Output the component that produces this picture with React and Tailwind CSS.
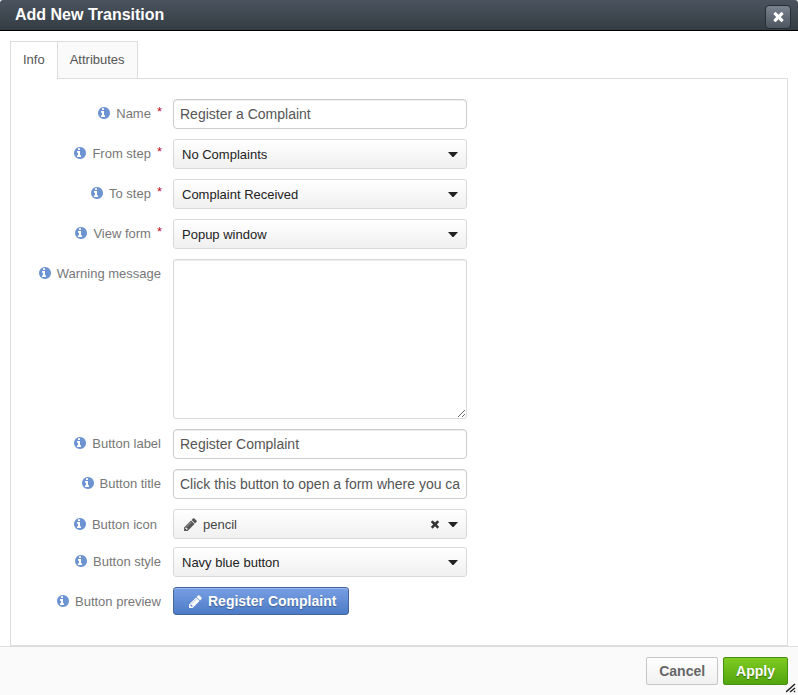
import React from 'react';

const PATHS = {
  info: 'M1024 1376v-160q0-14-9-23t-23-9h-96v-512q0-14-9-23t-23-9h-320q-14 0-23 9t-9 23v160q0 14 9 23t23 9h96v320h-96q-14 0-23 9t-9 23v160q0 14 9 23t23 9h448q14 0 23-9t9-23zM896 480v-160q0-14-9-23t-23-9h-192q-14 0-23 9t-9 23v160q0 14 9 23t23 9h192q14 0 23-9t9-23zM1664 896q0 209-103 385.500t-279.500 279.500-385.500 103-385.500-103-279.500-279.500-103-385.500 103-385.500 279.500-279.500 385.500-103 385.500 103 279.500 279.500 103 385.500z',
  pencil: 'M491 1536l91-91-235-235-91 91v107h128v128h107zM1014 608q0-22-22-22-10 0-17 7l-542 542q-7 7-7 17 0 22 22 22 10 0 17-7l542-542q7-7 7-17zM960 416l416 416-832 832h-416v-416zM1643 512q0 53-37 90l-166 166-416-416 166-165q36-38 90-38 53 0 91 38l235 234q37 39 37 91z',
  times: 'M1490 1322q0 40-28 68l-136 136q-28 28-68 28t-68-28l-294-294-294 294q-28 28-68 28t-68-28l-136-136q-28-28-28-68t28-68l294-294-294-294q-28-28-28-68t28-68l136-136q28-28 68-28t68 28l294 294 294-294q28-28 68-28t68 28l136 136q28 28 28 68t-28 68l-294 294 294 294q28 28 28 68z',
};

function Icon({ name, className }) {
  return (
    <svg viewBox="0 0 1792 1792" className={className} fill="currentColor" aria-hidden="true">
      <path d={PATHS[name]} />
    </svg>
  );
}

function Row({ id, label, required, centered, children }) {
  return (
    <div className={centered ? 'flex items-center gap-3' : 'flex items-start gap-3'}>
      <label
        htmlFor={id}
        className={
          'flex h-7 shrink-0 items-center justify-end whitespace-nowrap text-[13px] text-[#777] ' +
          (centered ? 'w-[150px] pr-1' : 'w-[150px]')
        }
      >
        <Icon name="info" className="mr-[5px] size-[14px] text-[#6d93d3]" />
        <span className="pt-0.5">{label}</span>
        {required && <span className="-mr-px ml-1.5 h-5 text-[13px] leading-[18px] text-[#c4122f]">*</span>}
      </label>
      <div className="w-[294px]">{children}</div>
    </div>
  );
}

function TextField({ id, value }) {
  return (
    <input
      id={id}
      type="text"
      defaultValue={value}
      className="block h-[30px] w-full rounded-[4px] border border-[#ccc] bg-white px-1.5 text-sm text-[#555] shadow-[inset_0_1px_1px_rgba(0,0,0,0.075)]"
    />
  );
}

function SelectField({ id, value, icon }) {
  return (
    <div className="relative">
      <select
        id={id}
        className={
          'block h-[30px] w-full appearance-none rounded-[3px] border border-[#d9d9d9] bg-linear-to-b from-white to-[#f0f0f0] pr-10 pt-0.5 text-[13px] ' +
          (icon ? 'pl-[29px] text-[#444]' : 'pl-2 text-[#222]')
        }
      >
        <option>{value}</option>
      </select>
      {icon && <Icon name={icon} className="pointer-events-none absolute left-2.5 top-2 size-[15px] text-[#555]" />}
      {icon && (
        <button type="button" aria-label="Clear" className="absolute right-[26px] top-[9px] text-[#333]">
          <Icon name="times" className="size-3" />
        </button>
      )}
      <svg viewBox="0 0 10 5" className="pointer-events-none absolute right-[9px] top-[13px] h-[5px] w-[10px] text-[#222]" fill="currentColor" aria-hidden="true">
        <path d="M0 0h10L5.500 5h-1z" />
      </svg>
    </div>
  );
}

export default function App() {
  return (
    <div className="relative flex min-h-screen flex-col bg-white font-['Liberation_Sans',Arial,sans-serif]">
      <header className="flex h-[31px] items-center justify-between rounded-t-[3px] border-b border-black bg-linear-to-b from-[#4b535f] to-[#343c43] pl-[15px] pr-[7px]">
        <h1 className="pb-px text-base font-bold leading-5 text-white">Add New Transition</h1>
        <button
          type="button"
          aria-label="Close"
          className="mt-[3px] flex h-6 w-[26px] items-center justify-center rounded-[4px] border border-[#272d34] bg-linear-to-b from-[#7b8390] to-[#4d5560] text-white"
        >
          <Icon name="times" className="size-[15px]" />
        </button>
      </header>

      <main className="flex grow flex-col px-2.5 pt-2.5">
        <div role="tablist" className="z-10 -mb-px flex text-[13px] text-[#555]">
          <button type="button" role="tab" aria-selected="true" className="h-[38px] border border-b-0 border-[#ddd] bg-white px-3 pb-0.5">
            Info
          </button>
          <button type="button" role="tab" aria-selected="false" className="h-[38px] border border-l-0 border-[#ddd] bg-[#fafafa] px-3 pb-px">
            Attributes
          </button>
        </div>
        <form className="flex grow flex-col gap-2.5 border border-[#ddd] pb-[30px] pt-5">
          <Row id="name" label="Name" required>
            <TextField id="name" value="Register a Complaint" />
          </Row>
          <Row id="from" label="From step" required>
            <SelectField id="from" value="No Complaints" />
          </Row>
          <Row id="to" label="To step" required>
            <SelectField id="to" value="Complaint Received" />
          </Row>
          <Row id="view" label="View form" required>
            <SelectField id="view" value="Popup window" />
          </Row>
          <Row id="warning" label="Warning message">
            <textarea id="warning" className="block h-40 w-full rounded-[3px] border border-[#d9d9d9] p-1.5 text-sm text-[#555] shadow-[inset_0_1px_1px_rgba(0,0,0,0.075)]" />
          </Row>
          <Row id="label" label="Button label">
            <TextField id="label" value="Register Complaint" />
          </Row>
          <Row id="title" label="Button title">
            <TextField id="title" value="Click this button to open a form where you can" />
          </Row>
          <div className="flex flex-col gap-2">
            <Row id="icon" label="Button icon" centered>
              <SelectField id="icon" value="pencil" icon="pencil" />
            </Row>
            <Row id="style" label="Button style">
              <SelectField id="style" value="Navy blue button" />
            </Row>
          </div>
          <Row id="preview" label="Button preview">
            <button
              id="preview"
              type="button"
              className="flex h-7 items-center gap-[5px] rounded-[3px] border border-[#47679b] bg-linear-to-b from-[#789fe4] to-[#4d7bc6] pl-3.5 pr-3 text-sm font-bold text-white shadow-[inset_0_1px_0_rgba(255,255,255,0.25)] text-shadow-[0_1px_1px_rgba(0,0,0,0.3)]"
            >
              <Icon name="pencil" className="size-[15px]" />
              Register Complaint
            </button>
          </Row>
        </form>
      </main>

      <footer className="flex h-[49px] items-center justify-end gap-[5px] border-t border-[#ddd] bg-[#fafafa] px-2.5 text-sm font-bold">
        <button type="button" className="h-7 rounded-[2px] border border-[#c6c6c6] bg-linear-to-b from-white to-[#f0f0f0] px-3 text-[#666]">
          Cancel
        </button>
        <button
          type="button"
          className="h-7 rounded-[2px] border border-[#459012] bg-linear-to-b from-[#7ecb20] to-[#52a50d] px-3 text-white text-shadow-[0_1px_1px_rgba(0,0,0,0.4)]"
        >
          Apply
        </button>
      </footer>
      <svg viewBox="0 0 10 10" className="absolute bottom-0.5 right-0.5 size-2.5" stroke="#222" strokeWidth="1.500" aria-hidden="true">
        <path d="M0 9L9 1M4 9l5-4M8 9l1-1" />
      </svg>
    </div>
  );
}
